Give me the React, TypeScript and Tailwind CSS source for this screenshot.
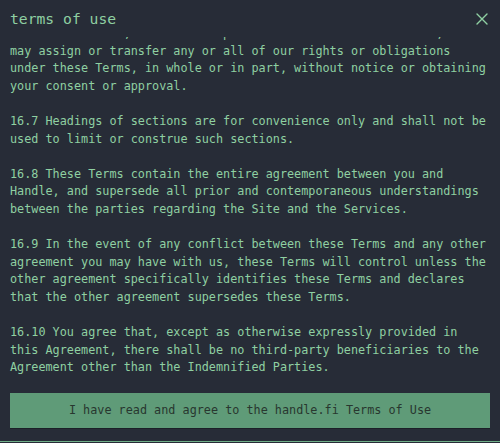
import React from 'react';

const paragraphs = [
  '16.6 You may not assign or transfer these Terms, by operation of law or otherwise, without our prior written consent. However, we may assign or transfer any or all of our rights or obligations under these Terms, in whole or in part, without notice or obtaining your consent or approval.',
  '16.7 Headings of sections are for convenience only and shall not be used to limit or construe such sections.',
  '16.8 These Terms contain the entire agreement between you and Handle, and supersede all prior and contemporaneous understandings between the parties regarding the Site and the Services.',
  '16.9 In the event of any conflict between these Terms and any other agreement you may have with us, these Terms will control unless the other agreement specifically identifies these Terms and declares that the other agreement supersedes these Terms.',
  '16.10 You agree that, except as otherwise expressly provided in this Agreement, there shall be no third-party beneficiaries to the Agreement other than the Indemnified Parties.',
];

export default function App() {
  return (
    <div
      className="w-[500px] h-[443px] bg-[#272c37] flex flex-col text-[#8fd0a2]"
      style={{ fontFamily: '"DejaVu Sans Mono", "Liberation Mono", monospace' }}
    >
      <div className="h-[37px] shrink-0 flex items-center justify-between pl-[10px] pr-[12px]">
        <h1 className="text-[14.7px] leading-[20px]">terms of use</h1>
        <button className="text-[#8fd0a2]" title="close">
          <svg width="12" height="12" viewBox="0 0 12 12" fill="none" stroke="currentColor" strokeWidth="1.4" strokeLinecap="round">
            <path d="M1 1L11 11M11 1L1 11" />
          </svg>
        </button>
      </div>

      <div className="h-[340px] shrink-0 overflow-hidden flex flex-col justify-end px-[10px] text-[11.8px] leading-[17.6px]">
        {paragraphs.map((p, i) => (
          <p key={i} className={`shrink-0 ${i < paragraphs.length - 1 ? 'mb-[17.6px]' : ''}`}>
            {p}
          </p>
        ))}
      </div>

      <div className="px-[10px] pt-[16px] pb-[13px] shrink-0">
        <button className="w-full h-[35px] bg-[#5f9b78] text-[#28372f] text-[11.8px] shadow-[0_1px_0_#1c2028]">
          I have read and agree to the handle.fi Terms of Use
        </button>
      </div>
      <div className="h-px bg-[#6fae88] shrink-0" />
      <div className="flex-1" />
    </div>
  );
}
